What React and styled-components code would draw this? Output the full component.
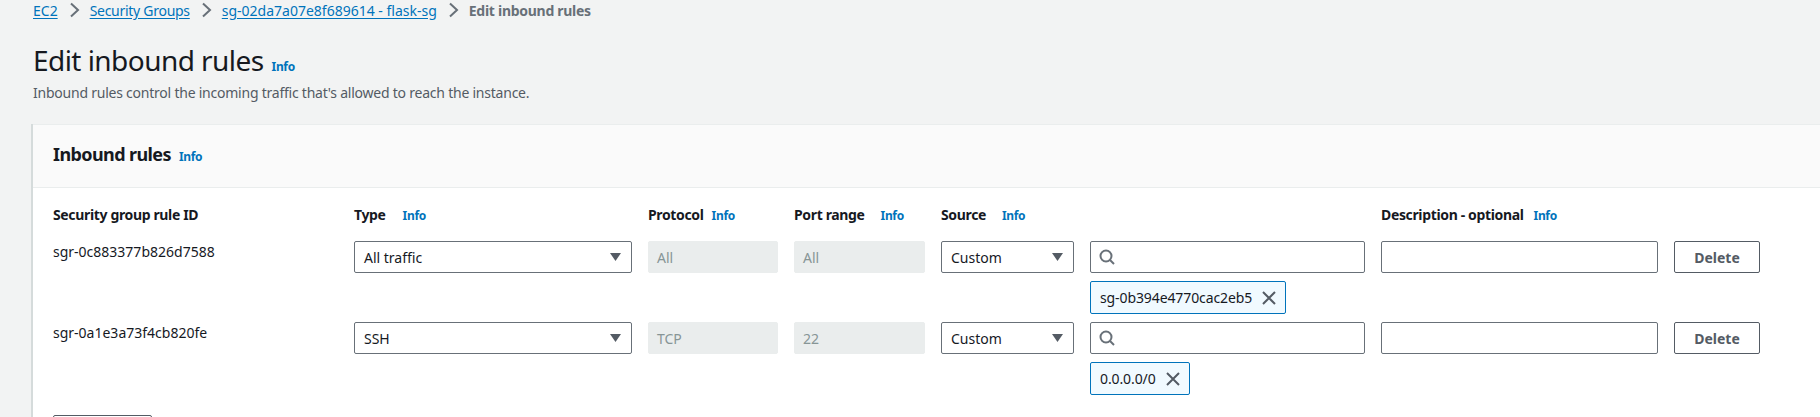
import React from "react";
import styled, {createGlobalStyle} from "styled-components";

const GlobalStyle = createGlobalStyle`
    html, body {
        margin: 0;
        height: 417px;
        overflow: hidden;
        background: #f2f3f3;
        font-family: "Noto Sans", "Liberation Sans", sans-serif;
        color: #16191f;
    }
`

const Page = styled.div`
    box-sizing: border-box;
    height: 417px;
    overflow: hidden;
    padding: 0 0 0 33px;
    width: 1820px;
`

const Crumbs = styled.nav`
    display: flex;
    align-items: center;
    height: 20px;
    font-size: 14px;
    color: #545b64;
`

const CrumbLink = styled.a`
    color: #0073bb;
    text-decoration: underline;
    text-underline-offset: 2px;
    letter-spacing: ${props => props.$tight ? "-0.28px" : "0"};
`

const CrumbSep = styled.svg`
    width: 16px;
    height: 16px;
    margin: 0 8px;
    fill: none;
    stroke: #687078;
    stroke-width: 2;
`

const CrumbCurrent = styled.span`
    font-weight: 700;
    color: #687078;
    letter-spacing: -0.28px;
`

const TitleRow = styled.div`
    display: flex;
    align-items: baseline;
    gap: 8px;
    margin-top: 22px;
`

const Title = styled.h1`
    margin: 0;
    font-size: 28px;
    line-height: 36px;
    font-weight: 400;
    letter-spacing: -0.55px;
`

const Info = styled.a`
    font-size: 12px;
    font-weight: 700;
    letter-spacing: -0.35px;
    color: #0073bb;
`

const Lead = styled.p`
    margin: 5px 0 0;
    font-size: 14px;
    line-height: 20px;
    letter-spacing: -0.23px;
    color: #545b64;
`

const Card = styled.section`
    margin-top: 21px;
    background: #fff;
    box-shadow: -2px 0 0 #d5dbdb;
    min-height: 400px;
`

const CardHead = styled.header`
    display: flex;
    align-items: baseline;
    gap: 8px;
    height: 64px;
    box-sizing: border-box;
    padding: 17px 20px 0;
    background: #fafafa;
    border-top: 1px solid #eaeded;
    border-bottom: 1px solid #eaeded;
`

const CardTitle = styled.h2`
    margin: 0;
    font-size: 18px;
    line-height: 24px;
    font-weight: 700;
    letter-spacing: -0.6px;
`

const Body = styled.div`
    padding: 15px 20px 0;
`

const Columns = `
    display: grid;
    grid-template-columns: 285px 278px 130px 131px 133px 275px 277px 86px;
    column-gap: 16px;
`

const HeadRow = styled.div`
    ${Columns}
    height: 22px;
    margin-bottom: 16px;
    align-items: center;
`

const HeadCell = styled.div`
    display: flex;
    align-items: baseline;
    gap: ${props => props.$gap || 8}px;
    font-size: 14px;
    font-weight: 700;
    letter-spacing: -0.35px;
`

const Row = styled.div`
    ${Columns}
    height: 81px;
    align-items: start;
`

const RuleId = styled.div`
    padding-top: 1px;
    font-size: 14px;
    line-height: 20px;
`

const field = `
    box-sizing: border-box;
    height: 32px;
    border: 1px solid #687078;
    border-radius: 2px;
    background: #fff;
    display: flex;
    align-items: center;
    font-size: 14px;
`

const Select = styled.div`
    ${field}
    justify-content: space-between;
    padding: 0 10px 0 9px;
`

const Caret = styled.svg`
    width: 11px;
    height: 8px;
    fill: #545b64;
`

const Disabled = styled.div`
    ${field}
    background: #eaeded;
    border-color: #eaeded;
    color: #879596;
    padding: 0 8px;
`

const SearchColumn = styled.div`
    display: flex;
    flex-direction: column;
    align-items: flex-start;
    gap: 8px;
`

const Search = styled.div`
    ${field}
    width: 100%;
    padding: 0 8px;
`

const SearchIcon = styled.svg`
    width: 16px;
    height: 16px;
    fill: none;
    stroke: #687078;
    stroke-width: 2;
`

const Token = styled.div`
    box-sizing: border-box;
    height: 33px;
    display: flex;
    align-items: center;
    gap: 9px;
    padding: 0 8px 0 9px;
    font-size: 14px;
    letter-spacing: -0.1px;
    background: #f1faff;
    border: 1px solid #0073bb;
    border-radius: 2px;
`

const TokenClose = styled.svg`
    width: 16px;
    height: 16px;
    fill: none;
    stroke: #545b64;
    stroke-width: 2;
`

const Input = styled.div`
    ${field}
`

const Button = styled.button`
    box-sizing: border-box;
    height: 32px;
    font-family: inherit;
    font-size: 14px;
    font-weight: 700;
    color: #545b64;
    background: #fff;
    border: 1px solid #545b64;
    border-radius: 2px;
    padding: 0;
`

const AddButton = styled(Button)`
    display: block;
    width: 99px;
    margin-top: 12px;
`

const rules = [
    {id: "sgr-0c883377b826d7588", type: "All traffic", protocol: "All", port: "All", token: "sg-0b394e4770cac2eb5"},
    {id: "sgr-0a1e3a73f4cb820fe", type: "SSH", protocol: "TCP", port: "22", token: "0.0.0.0/0"},
];

const Chevron = () => (
    <CrumbSep viewBox="0 0 16 16"><path d="M5 1.5 12 8l-7 6.5" /></CrumbSep>
)

const Arrow = () => (
    <Caret viewBox="0 0 11 8"><path d="M0 0h11L5.5 8z" /></Caret>
)

const App = () => {
    return (
        <Page>
            <GlobalStyle />
            <Crumbs>
                <CrumbLink>EC2</CrumbLink>
                <Chevron />
                <CrumbLink $tight>Security Groups</CrumbLink>
                <Chevron />
                <CrumbLink>sg-02da7a07e8f689614 - flask-sg</CrumbLink>
                <Chevron />
                <CrumbCurrent>Edit inbound rules</CrumbCurrent>
            </Crumbs>
            <TitleRow>
                <Title>Edit inbound rules</Title>
                <Info>Info</Info>
            </TitleRow>
            <Lead>Inbound rules control the incoming traffic that's allowed to reach the instance.</Lead>
            <Card>
                <CardHead>
                    <CardTitle>Inbound rules</CardTitle>
                    <Info>Info</Info>
                </CardHead>
                <Body>
                    <HeadRow>
                        <HeadCell>Security group rule ID</HeadCell>
                        <HeadCell $gap={17}>Type <Info>Info</Info></HeadCell>
                        <HeadCell>Protocol <Info>Info</Info></HeadCell>
                        <HeadCell $gap={16}>Port range <Info>Info</Info></HeadCell>
                        <HeadCell $gap={16}>Source <Info>Info</Info></HeadCell>
                        <HeadCell />
                        <HeadCell $gap={10}>Description - optional <Info>Info</Info></HeadCell>
                        <HeadCell />
                    </HeadRow>
                    {rules.map(rule => (
                        <Row key={rule.id}>
                            <RuleId>{rule.id}</RuleId>
                            <Select>{rule.type}<Arrow /></Select>
                            <Disabled>{rule.protocol}</Disabled>
                            <Disabled>{rule.port}</Disabled>
                            <Select>Custom<Arrow /></Select>
                            <SearchColumn>
                                <Search>
                                    <SearchIcon viewBox="0 0 16 16"><circle cx="7" cy="7" r="5.5" /><path d="m11 11 4 4" /></SearchIcon>
                                </Search>
                                <Token>
                                    {rule.token}
                                    <TokenClose viewBox="0 0 16 16"><path d="m2 2 12 12M14 2 2 14" /></TokenClose>
                                </Token>
                            </SearchColumn>
                            <Input />
                            <Button>Delete</Button>
                        </Row>
                    ))}
                    <AddButton />
                </Body>
            </Card>
        </Page>
    )
}

export default App;
